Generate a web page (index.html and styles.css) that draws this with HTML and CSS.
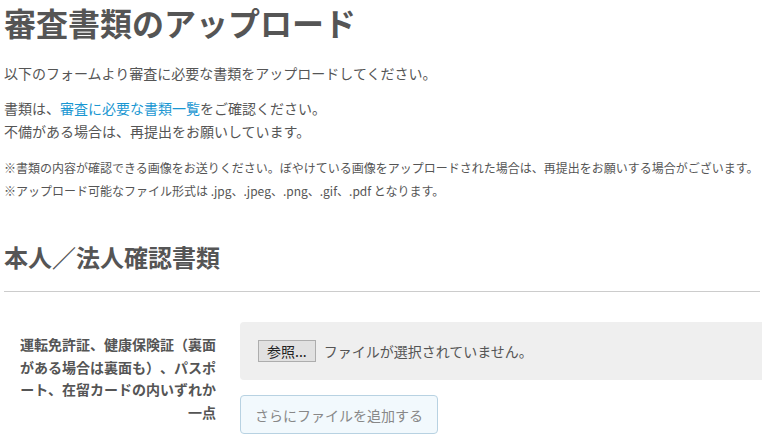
FILE: index.html
```html
<!DOCTYPE html>
<html lang="ja">
<head>
  <meta charset="UTF-8">
  <meta name="viewport" content="width=device-width, initial-scale=1.0">
  <title>審査書類のアップロード</title>
  <link rel="stylesheet" href="styles.css">
</head>
<body>
  <div class="page">
    <h1>審査書類のアップロード</h1>
    <p class="lead">以下のフォームより審査に必要な書類をアップロードしてください。</p>
    <p class="lead">書類は、<a href="#" class="doc-link">審査に必要な書類一覧</a>をご確認ください。<br>不備がある場合は、再提出をお願いしています。</p>

    <div class="notes">
      <p>※書類の内容が確認できる画像をお送りください。ぼやけている画像をアップロードされた場合は、再提出をお願いする場合がございます。</p>
      <p>※アップロード可能なファイル形式は .jpg、.jpeg、.png、.gif、.pdf となります。</p>
    </div>

    <h2>本人／法人確認書類</h2>

    <div class="form-row">
      <div class="form-label">運転免許証、健康保険証（裏面がある場合は裏面も）、パスポート、在留カードの内いずれか一点</div>
      <div class="form-field">
        <div class="file-box">
          <button type="button" class="file-btn">参照...</button>
          <span class="file-name">ファイルが選択されていません。</span>
        </div>
        <button type="button" class="add-btn">さらにファイルを追加する</button>
      </div>
    </div>
  </div>
</body>
</html>
```

FILE: styles.css
```css
body {
  margin: 0;
  font-family: "Noto Sans CJK JP", "Noto Sans", sans-serif;
  color: #555;
  background-color: #fff;
  overflow: hidden;
  text-spacing-trim: space-all;
}
.page {
  padding: 0 2px 0 4px;
}
h1 {
  margin: 0;
  padding-top: 2px;
  font-size: 32px;
  line-height: 40px;
  font-weight: bold;
  color: #555;
}
.lead {
  margin: 20px 0 0;
  font-size: 14px;
  line-height: 23px;
}
.lead + .lead {
  margin-top: 12px;
}
.doc-link {
  color: #1a97d2;
  text-decoration: none;
}
.notes {
  margin-top: 13px;
}
.notes p {
  margin: 0;
  font-size: 12px;
  line-height: 23px;
  white-space: nowrap;
}
h2 {
  margin: 39px 0 0;
  font-size: 24px;
  line-height: 32px;
  font-weight: bold;
  color: #555;
}
.form-row {
  display: flex;
  margin-top: 18px;
  padding-top: 30px;
  border-top: 1px solid #ccc;
}
.form-label {
  width: 198px;
  padding: 11px 24px 0 14px;
  text-align: right;
  font-size: 14px;
  line-height: 22.5px;
  font-weight: bold;
}
.form-field {
  flex: 1;
  margin-right: -2px;
}
.file-box {
  display: flex;
  align-items: center;
  gap: 8px;
  height: 58px;
  padding: 0 18px;
  background-color: #efefef;
  border-radius: 4px 0 0 4px;
}
.file-btn {
  height: 22px;
  padding: 0 8px;
  border: 1px solid #adadad;
  background-color: #e1e1e1;
  font-family: inherit;
  font-size: 14px;
  color: #222;
}
.file-name {
  font-size: 14px;
  color: #555;
}
.add-btn {
  margin-top: 15px;
  height: 39px;
  padding: 0 14px;
  border: 1px solid #b8d2e2;
  border-radius: 4px;
  background-color: #f2f9fd;
  font-family: inherit;
  font-size: 14px;
  color: #888;
}
```
